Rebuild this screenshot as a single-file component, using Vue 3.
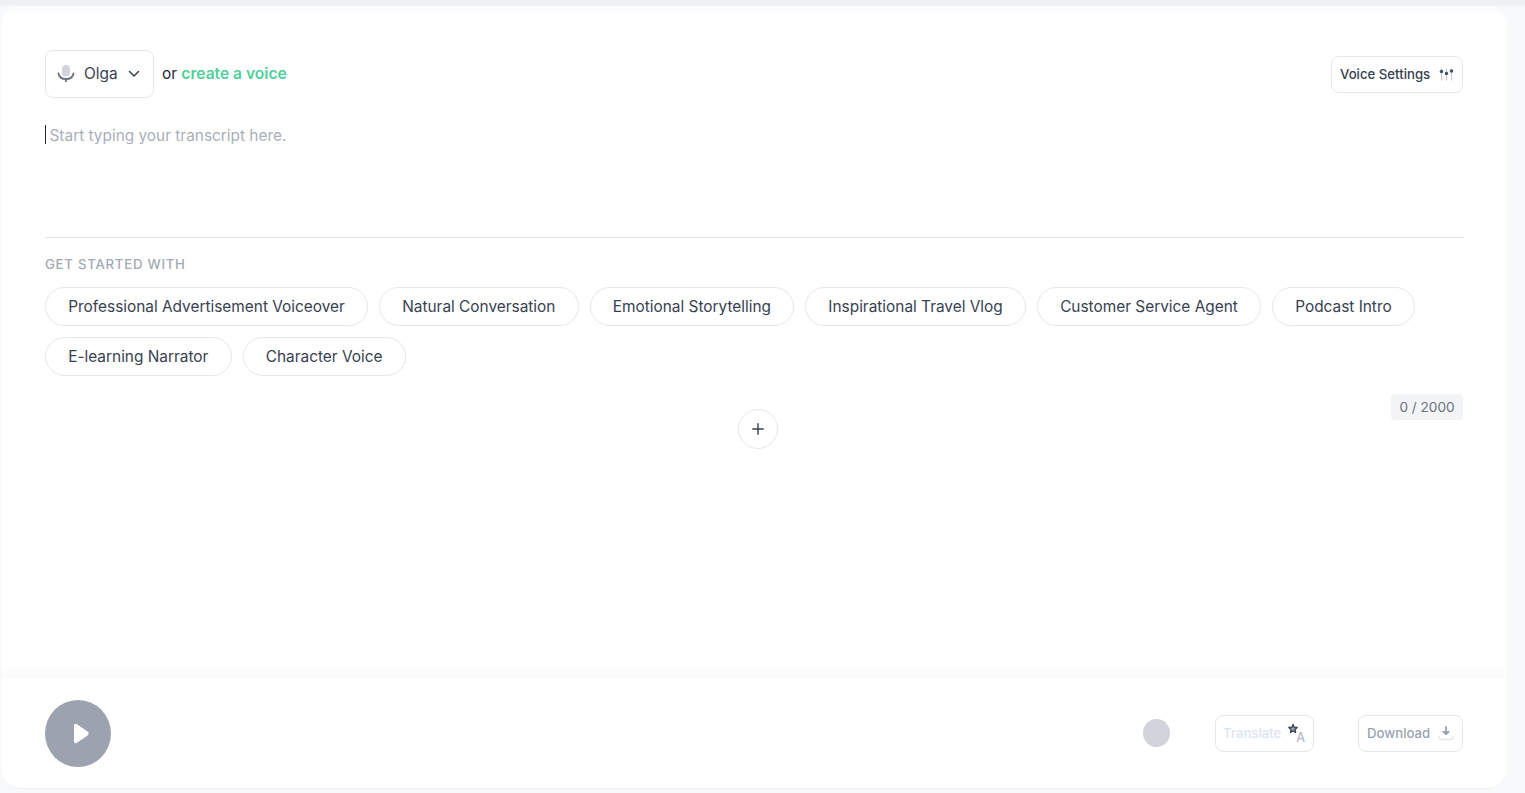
<script setup>
const row1 = ['Professional Advertisement Voiceover', 'Natural Conversation', 'Emotional Storytelling', 'Inspirational Travel Vlog', 'Customer Service Agent', 'Podcast Intro']
const row2 = ['E-learning Narrator', 'Character Voice']
</script>

<template>
  <div class="page">
    <main class="card">
      <section class="editor">
        <div class="top-row">
          <div class="voice-pick">
            <button class="select">
              <svg class="mic" width="18" height="18" viewBox="0 0 18 18">
                <rect x="5" y="1" width="8" height="11.5" rx="4" fill="#d1d5db" />
                <path d="M1.5 9.5C2 13 5 15 9 15s7-2 7.5-5.5" fill="none" stroke="#6b7280" stroke-width="1.8" stroke-linecap="round" />
                <path d="M9 15v2.4" stroke="#6b7280" stroke-width="1.8" stroke-linecap="round" />
              </svg>
              <span class="select-name">Olga</span>
              <svg class="chev" width="12" height="8" viewBox="0 0 12 8">
                <path d="M1.5 1.5 6 6l4.5-4.5" fill="none" stroke="#374151" stroke-width="1.5" stroke-linecap="round" stroke-linejoin="round" />
              </svg>
            </button>
            <span class="or">or <a class="create">create a voice</a></span>
          </div>
          <button class="small-btn settings">
            <span>Voice Settings</span>
            <svg width="15" height="13" viewBox="0 0 15 13">
              <g stroke="#c4c8cf" stroke-width="1.2" stroke-linecap="round">
                <path d="M2.5 1v11M7.5 1v11M12.5 1v11" />
              </g>
              <circle cx="2.5" cy="3.5" r="1.8" fill="#4b5563" />
              <circle cx="7.5" cy="5.5" r="1.8" fill="#4b5563" />
              <circle cx="12.5" cy="3" r="1.8" fill="#4b5563" />
            </svg>
          </button>
        </div>

        <div class="transcript"><span class="caret"></span><span class="placeholder">Start typing your transcript here.</span></div>

        <hr class="rule" />

        <div class="eyebrow">GET STARTED WITH</div>
        <div class="chips">
          <button v-for="c in row1" :key="c" class="chip">{{ c }}</button>
        </div>
        <div class="chips second">
          <button v-for="c in row2" :key="c" class="chip">{{ c }}</button>
        </div>

        <div class="count-row"><span class="count">0 / 2000</span></div>
        <div class="add-row">
          <button class="add">
            <svg width="12" height="12" viewBox="0 0 12 12">
              <path d="M6 .8v10.4M.8 6h10.4" stroke="#374151" stroke-width="1.4" stroke-linecap="round" />
            </svg>
          </button>
        </div>
      </section>

      <footer class="bar">
        <button class="play">
          <svg width="16" height="21" viewBox="0 0 16 21">
            <path d="M3.6 1 14.6 8.6a2.3 2.3 0 0 1 0 3.8L3.6 20A1.7 1.7 0 0 1 1 18.6V2.4A1.7 1.7 0 0 1 3.6 1Z" fill="#fff" />
          </svg>
        </button>
        <div class="actions">
          <span class="dot"></span>
          <button class="small-btn translate">
            <span>Translate</span>
            <span class="tr-icon">
              <svg width="12" height="12" viewBox="0 0 12 12">
                <path d="M6 1.4l1.2 2.8 3 .3-2.3 2 .7 3L6 8 3.4 9.5l.7-3-2.3-2 3-.3Z" fill="#9ca3af" stroke="#374151" stroke-width="1.3" stroke-linejoin="round" />
              </svg>
              <span class="tr-a">A</span>
            </span>
          </button>
          <button class="small-btn download">
            <span>Download</span>
            <svg width="16" height="15" viewBox="0 0 16 15">
              <path d="M8 1v7" stroke="#9ca3af" stroke-width="1.8" stroke-linecap="round" />
              <path d="M4.6 5.6 8 9l3.4-3.4Z" fill="#9ca3af" stroke="#9ca3af" stroke-linejoin="round" />
              <path d="M1 10.5v.5a2.5 2.5 0 0 0 2.5 2.5h9A2.5 2.5 0 0 0 15 11v-.5" fill="none" stroke="#e5e7eb" stroke-width="1.5" stroke-linecap="round" />
            </svg>
          </button>
        </div>
      </footer>
    </main>
  </div>
</template>

<style>
html, body { margin: 0; background: #f8f9fb; overflow: hidden; }
</style>

<style scoped>
.page {
  width: 1525px;
  height: 793px;
  box-sizing: border-box;
  padding: 6px 18px 5px 1px;
  font-family: Inter, "Liberation Sans", sans-serif;
  background: linear-gradient(#eef0f2 0, #eef0f2 5px, #f8f9fb 6px);
}
button { font-family: inherit; background: #fff; cursor: pointer; margin: 0; }
.card {
  height: 100%;
  display: flex;
  flex-direction: column;
  background: #fff;
  border-radius: 20px;
  overflow: hidden;
  box-shadow: 0 1px 1px #eef0f3;
}
.editor {
  flex: 1;
  min-height: 0;
  box-sizing: border-box;
  padding: 44px 43px 0 44px;
  background: linear-gradient(#fcfcfd 0, #fff 10px, #fff 658px, #fafafb 672px);
}
.top-row { display: flex; align-items: center; justify-content: space-between; padding-right: 1px; }
.voice-pick { display: flex; align-items: center; gap: 8px; }
.select {
  width: 109px;
  height: 48px;
  display: flex;
  align-items: center;
  padding: 0 0 2px 11px;
  box-sizing: border-box;
  border: 1px solid #e5e7eb;
  border-radius: 8px;
  color: #374151;
}
.select-name { margin-left: 9px; font-size: 15.4px; }
.chev { margin-left: 10px; margin-top: 2px; }
.or { font-size: 15.4px; color: #1f2937; position: relative; top: -1px; }
.create { color: #4ed09a; font-weight: 600; font-size: 15.6px; }
.small-btn {
  height: 37px;
  display: flex;
  align-items: center;
  justify-content: space-between;
  box-sizing: border-box;
  padding: 0 8px;
  border: 1px solid #e5e7eb;
  border-radius: 8px;
  font-size: 13.2px;
  font-weight: 500;
}
.settings { width: 132px; color: #374151; }
.transcript { display: flex; margin-top: 27px; height: 112px; }
.caret { width: 1px; height: 19px; background: #1f2937; margin-right: 3.5px; }
.placeholder { font-size: 15.4px; line-height: 21px; color: #a8afba; }
.rule { margin: 0; border: 0; border-top: 1px solid #e5e7eb; }
.eyebrow {
  margin-top: 19px;
  font-size: 13.2px;
  line-height: 14px;
  font-weight: 500;
  letter-spacing: 0.75px;
  color: #a3a9b5;
}
.chips { display: flex; gap: 11px; margin-top: 16px; }
.chips.second { margin-top: 11px; }
.chip {
  height: 39px;
  padding: 0 22.2px 1px;
  border: 1px solid #e5e7eb;
  border-radius: 20px;
  font-size: 15.4px;
  color: #374151;
  white-space: nowrap;
}
.count-row { display: flex; justify-content: flex-end; margin-top: 18px; height: 26px; padding-right: 1px; }
.count {
  width: 72px;
  height: 26px;
  line-height: 27px;
  text-align: center;
  background: #f3f4f6;
  border-radius: 4px;
  font-size: 13.6px;
  color: #6b7280;
}
.add-row { display: flex; justify-content: center; margin-top: -11px; padding-left: 7px; }
.add {
  width: 40px;
  height: 40px;
  padding: 0;
  display: flex;
  align-items: center;
  justify-content: center;
  border: 1px solid #e5e7eb;
  border-radius: 50%;
}
.bar {
  height: 110px;
  flex: none;
  display: flex;
  align-items: center;
  justify-content: space-between;
  box-sizing: border-box;
  padding: 0 44px;
  background: #fff;
}
.play {
  width: 66px;
  height: 67px;
  padding: 0 0 0 6px;
  display: flex;
  align-items: center;
  justify-content: center;
  border: 0;
  border-radius: 50%;
  background: #9ca3af;
}
.actions { display: flex; align-items: center; }
.dot { width: 27px; height: 28px; border-radius: 50%; background: #d1d5db; }
.translate { width: 99px; margin-left: 45px; padding-left: 7px; color: #dbe4f5; }
.tr-icon { position: relative; width: 17px; height: 20px; display: block; }
.tr-icon svg { position: absolute; left: -1px; top: 0; }
.tr-a { position: absolute; right: 0; bottom: -2px; font-size: 12.5px; font-weight: 500; color: #b4b9c3; }
.download { width: 105px; margin-left: 44px; color: #9ca3af; }
</style>
